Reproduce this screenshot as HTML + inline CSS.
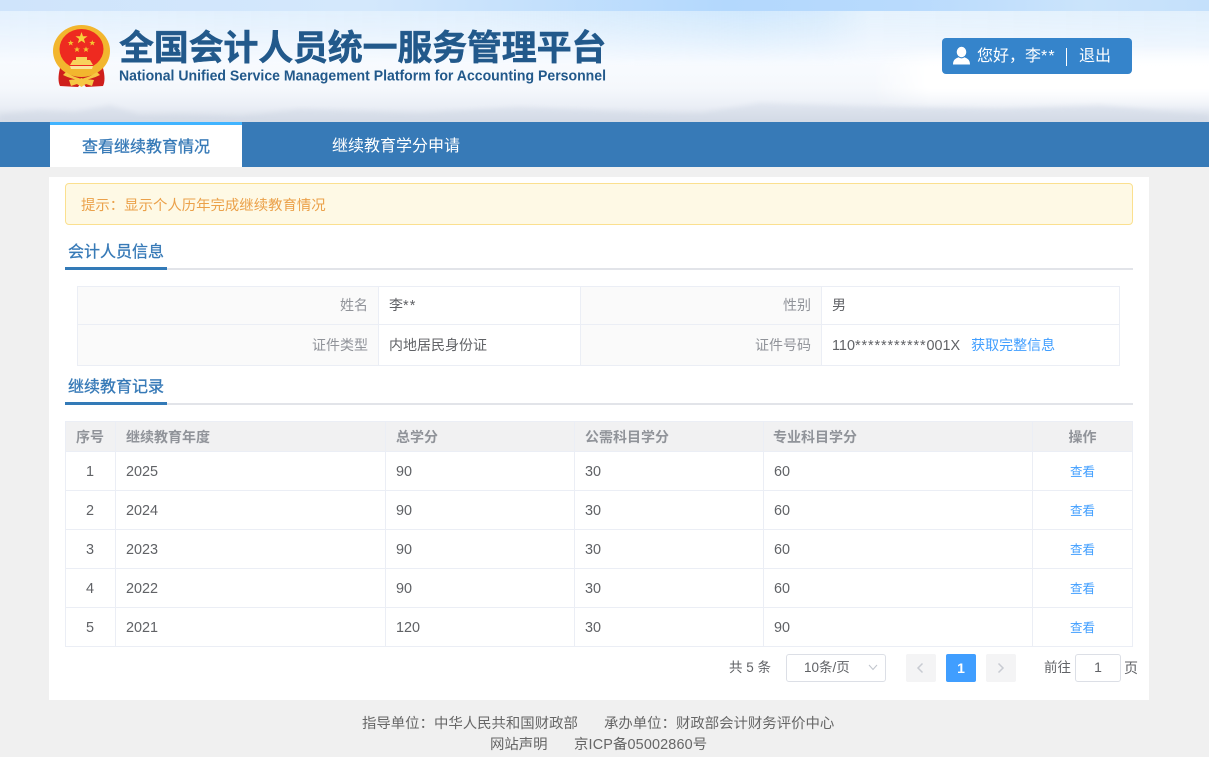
<!DOCTYPE html>
<html lang="zh-CN">
<head>
<meta charset="utf-8">
<title>全国会计人员统一服务管理平台</title>
<style>
*{box-sizing:border-box;margin:0;padding:0}
html,body{width:1209px;height:757px;overflow:hidden;background:#f0f0f0}
body{position:relative;font-family:"Liberation Sans","Noto Sans CJK SC",sans-serif;font-size:14px;color:#606266}
.a{position:absolute;white-space:nowrap}
#hd{left:0;top:0;width:1209px;height:122px;overflow:hidden;
background:linear-gradient(180deg,#e9f4fe 11px,#eef6fe 30px,#f8fbff 62px,#f5f8fc 88px,#ebeff6 106px,#d8dee8 122px)}
.cell{position:absolute;border:1px solid #ebeef5;line-height:37px}
.g{background:#fafafa;color:#909399;text-align:right;padding-right:10px}
.v{background:#fff;padding-left:10px}
.st{letter-spacing:1.100px}
.n{font-size:14.400px}
.vl{position:absolute;top:421px;height:226px;width:1px;background:#ebeef5}
.hl{position:absolute;left:65px;width:1068px;height:1px;background:#ebeef5}
.th{position:absolute;top:428px;font-size:14px;font-weight:bold;color:#909399;line-height:18px}
.c{position:absolute;line-height:20px;color:#606266;font-size:14.400px}
.l{position:absolute;left:1032px;width:101px;text-align:center;font-size:12.500px;color:#409eff;line-height:20px}
.pg{position:absolute;top:654px;width:30px;height:28px;border-radius:2px;background:#f4f4f5;text-align:center}
.ti{font-size:16px;line-height:22px;color:#377ab7;-webkit-text-stroke:.3px #377ab7}
.ft{font-size:14.400px;line-height:20px;color:#666}
.pt{font-size:13.500px;line-height:20px}
</style>
</head>
<body>
<div class="a" id="hd">
<div class="a" style="left:0;top:0;width:1209px;height:11px;background:linear-gradient(90deg,#cfe4fb,#d4e8fc 30%,#b3d8fd 60%,#b8dafd 75%,#cbe4fb 90%,#c4e0fb)"></div>
<div class="a" style="left:0;top:11px;width:1209px;height:55px;background:linear-gradient(90deg,rgba(210,232,252,.2) 0,rgba(205,230,252,.3) 40%,rgba(195,226,252,.65) 62%,rgba(200,228,252,.55) 68%,rgba(225,240,252,.35) 72%,rgba(215,235,252,.4) 100%);-webkit-mask-image:linear-gradient(180deg,#000,transparent)"></div>
<div class="a" style="left:870px;top:45px;width:339px;height:65px;background:linear-gradient(180deg,rgba(255,255,255,0),#fff 35%,#fff 65%,rgba(255,255,255,0));-webkit-mask-image:linear-gradient(90deg,transparent,#000 60px)"></div>
<svg class="a" style="left:0;top:85px;filter:blur(2px)" width="1209" height="37" viewBox="0 0 1209 37"><path d="M0 37V29L40 25 75 27 110 20 140 30 180 29 240 31 300 24 420 28 520 22 640 27 700 28 760 18 900 22 1000 24 1100 20 1160 26 1209 29V37Z" fill="#c4cede" opacity=".3"/></svg>
<svg class="a" style="left:0;top:0" width="130" height="95" viewBox="0 0 130 95">
<path d="M60 68C58 76 58 82 60 86L78 87 82 82 86 87 103 86C105 82 105 76 103 68Z" fill="#cf1f1c"/>
<ellipse cx="81.500" cy="51" rx="28.500" ry="26" fill="#f2b62e"/>
<ellipse cx="81.500" cy="49" rx="22" ry="20" fill="#ee2a20"/>
<polygon points="81.500,32 83,36.300 87.500,36.300 83.900,39 85.200,43.300 81.500,40.700 77.800,43.300 79.100,39 75.500,36.300 80,36.300" fill="#f6d23b"/>
<polygon points="70.700,40 71.500,42 73.700,42 72,43.300 72.600,45.500 70.700,44.200 68.800,45.500 69.400,43.300 67.700,42 69.900,42" fill="#f3c431"/>
<polygon points="92.300,40 93.100,42 95.300,42 93.600,43.300 94.200,45.500 92.300,44.200 90.400,45.500 91,43.300 89.300,42 91.500,42" fill="#f3c431"/>
<polygon points="77,46.500 77.800,48.500 80,48.500 78.300,49.800 78.900,52 77,50.700 75.100,52 75.700,49.800 74,48.500 76.200,48.500" fill="#f3c431"/>
<polygon points="86,46.500 86.800,48.500 89,48.500 87.300,49.800 87.900,52 86,50.700 84.100,52 84.700,49.800 83,48.500 85.200,48.500" fill="#f3c431"/>
<path d="M76 57H87V60H90L93 65H70L73 60H76Z" fill="#f8d25c"/>
<path d="M70 66H93L92 69H71Z" fill="#fbe39a"/>
<path d="M66 72C73 77 76 77 81.500 79 87 77 90 77 97 72L100 75C94 78 88 79 81.500 82 75 79 69 78 63 75Z" fill="#f6c744"/>
<path d="M69 80C74 79 78 80 81.500 78 85 80 89 79 94 80L92 86 86 84 81.500 87 77 84 71 86Z" fill="#f6c744"/>
</svg>
<div class="a" style="left:119px;top:26px;font-size:35px;line-height:46px;font-weight:bold;color:#22598b;letter-spacing:-.2px;-webkit-text-stroke:.5px #22598b">全国会计人员统一服务管理平台</div>
<svg class="a" style="left:0;top:62px" width="700" height="24"><text x="119" y="18.500" font-family="Liberation Sans" font-size="14.500" font-weight="bold" fill="#22598b" textLength="487" lengthAdjust="spacingAndGlyphs">National Unified Service Management Platform for Accounting Personnel</text></svg>
<div class="a" style="left:942px;top:38px;width:190px;height:36px;background:#3584cb;border-radius:4px"></div>
<svg class="a" style="left:952px;top:46px" width="20" height="20" viewBox="0 0 20 20"><ellipse cx="9.500" cy="6" rx="4.800" ry="5.200" fill="#fff"/><path d="M1 18.500C1 13.500 4 12.500 6.500 11.300 8.500 12.700 10.500 12.700 12.500 11.300 15 12.500 18 13.500 18 18.500Z" fill="#fff"/></svg>
<div class="a" style="left:977px;top:46px;font-size:16px;line-height:22px;color:#fff">您好，李<span class="st">**</span></div>
<div class="a" style="left:1066px;top:48px;width:1px;height:18px;background:#fff"></div>
<div class="a" style="left:1079px;top:46px;font-size:16px;line-height:22px;color:#fff">退出</div>
</div>

<div class="a" style="left:0;top:122px;width:1209px;height:45px;background:#377ab7"></div>
<div class="a" style="left:50px;top:122px;width:192px;height:45px;background:#fff;border-top:3px solid #41b4ff"></div>
<div class="a ti" style="left:50px;top:137px;width:192px;text-align:center">查看继续教育情况</div>
<div class="a" style="left:332px;top:136px;font-size:16px;line-height:22px;color:#fff">继续教育学分申请</div>

<div class="a" style="left:49px;top:177px;width:1100px;height:523px;background:#fff"></div>
<div class="a" style="left:65px;top:183px;width:1068px;height:42px;background:#fef9e5;border:1px solid #fbe08f;border-radius:4px"></div>
<div class="a" style="left:81px;top:196px;font-size:14.400px;line-height:20px;color:#eba14a">提示：显示个人历年完成继续教育情况</div>

<div class="a" style="left:65px;top:268px;width:1068px;height:2px;background:#e2e4e9"></div>
<div class="a" style="left:65px;top:267px;width:102px;height:3px;background:#337ab7"></div>
<div class="a ti" style="left:68px;top:242px">会计人员信息</div>

<div class="cell g" style="left:77px;top:286px;width:302px;height:39px">姓名</div>
<div class="cell v" style="left:378px;top:286px;width:203px;height:39px">李<span class="st n">**</span></div>
<div class="cell g" style="left:580px;top:286px;width:242px;height:39px">性别</div>
<div class="cell v" style="left:821px;top:286px;width:299px;height:39px">男</div>
<div class="cell g" style="left:77px;top:324px;width:302px;height:42px;line-height:40px">证件类型</div>
<div class="cell v" style="left:378px;top:324px;width:203px;height:42px;line-height:40px">内地居民身份证</div>
<div class="cell g" style="left:580px;top:324px;width:242px;height:42px;line-height:40px">证件号码</div>
<div class="cell v" style="left:821px;top:324px;width:299px;height:42px;line-height:40px"><span class="n">110<span style="letter-spacing:.9px">***********</span>001X</span><span style="color:#409eff;margin-left:11px">获取完整信息</span></div>

<div class="a" style="left:65px;top:403px;width:1068px;height:2px;background:#e2e4e9"></div>
<div class="a" style="left:65px;top:402px;width:102px;height:3px;background:#337ab7"></div>
<div class="a ti" style="left:68px;top:377px">继续教育记录</div>

<div class="a" style="left:65px;top:421px;width:1068px;height:31px;background:#f1f1f2"></div>
<div class="hl" style="top:421px"></div><div class="hl" style="top:451px"></div><div class="hl" style="top:490px"></div><div class="hl" style="top:529px"></div><div class="hl" style="top:568px"></div><div class="hl" style="top:607px"></div><div class="hl" style="top:646px"></div>
<div class="vl" style="left:65px"></div><div class="vl" style="left:115px"></div><div class="vl" style="left:385px"></div><div class="vl" style="left:574px"></div><div class="vl" style="left:763px"></div><div class="vl" style="left:1032px"></div><div class="vl" style="left:1132px"></div>

<div class="th" style="left:65px;width:50px;text-align:center">序号</div>
<div class="th" style="left:126px">继续教育年度</div>
<div class="th" style="left:396px">总学分</div>
<div class="th" style="left:585px">公需科目学分</div>
<div class="th" style="left:773px">专业科目学分</div>
<div class="th" style="left:1032px;width:101px;text-align:center">操作</div>

<div class="c" style="left:65px;top:462px;width:50px;text-align:center">1</div><div class="c" style="left:126px;top:462px">2025</div><div class="c" style="left:396px;top:462px">90</div><div class="c" style="left:585px;top:462px">30</div><div class="c" style="left:774px;top:462px">60</div><div class="l" style="top:462px">查看</div>
<div class="c" style="left:65px;top:501px;width:50px;text-align:center">2</div><div class="c" style="left:126px;top:501px">2024</div><div class="c" style="left:396px;top:501px">90</div><div class="c" style="left:585px;top:501px">30</div><div class="c" style="left:774px;top:501px">60</div><div class="l" style="top:501px">查看</div>
<div class="c" style="left:65px;top:540px;width:50px;text-align:center">3</div><div class="c" style="left:126px;top:540px">2023</div><div class="c" style="left:396px;top:540px">90</div><div class="c" style="left:585px;top:540px">30</div><div class="c" style="left:774px;top:540px">60</div><div class="l" style="top:540px">查看</div>
<div class="c" style="left:65px;top:579px;width:50px;text-align:center">4</div><div class="c" style="left:126px;top:579px">2022</div><div class="c" style="left:396px;top:579px">90</div><div class="c" style="left:585px;top:579px">30</div><div class="c" style="left:774px;top:579px">60</div><div class="l" style="top:579px">查看</div>
<div class="c" style="left:65px;top:618px;width:50px;text-align:center">5</div><div class="c" style="left:126px;top:618px">2021</div><div class="c" style="left:396px;top:618px">120</div><div class="c" style="left:585px;top:618px">30</div><div class="c" style="left:774px;top:618px">90</div><div class="l" style="top:618px">查看</div>

<div class="a pt" style="left:729px;top:658px">共 5 条</div>
<div class="a" style="left:786px;top:654px;width:100px;height:28px;border:1px solid #dcdfe6;border-radius:3px;background:#fff"></div>
<div class="a pt" style="left:804px;top:658px">10条/页</div>
<svg class="a" style="left:868px;top:662px" width="10" height="10" viewBox="0 0 10 10"><path d="M1 3 5 7.500 9 3" fill="none" stroke="#c0c4cc" stroke-width="1"/></svg>
<div class="pg" style="left:906px"></div>
<svg class="a" style="left:915px;top:662px" width="10" height="12" viewBox="0 0 10 12"><path d="M7.500 1.500 3 6 7.500 10.500" fill="none" stroke="#c8cbd2" stroke-width="1.500"/></svg>
<div class="pg" style="left:946px;background:#409eff;color:#fff;font-size:14px;font-weight:bold;line-height:28px">1</div>
<div class="pg" style="left:986px"></div>
<svg class="a" style="left:996px;top:662px" width="10" height="12" viewBox="0 0 10 12"><path d="M2.500 1.500 7 6 2.500 10.500" fill="none" stroke="#c8cbd2" stroke-width="1.500"/></svg>
<div class="a pt" style="left:1044px;top:658px">前往</div>
<div class="a" style="left:1075px;top:654px;width:46px;height:28px;border:1px solid #dcdfe6;border-radius:3px;background:#fff;text-align:center;font-size:14px;line-height:25px">1</div>
<div class="a" style="left:1124px;top:658px;font-size:14px;line-height:20px">页</div>

<div class="a ft" style="left:362px;top:714px">指导单位：中华人民共和国财政部</div>
<div class="a ft" style="left:604px;top:714px">承办单位：财政部会计财务评价中心</div>
<div class="a ft" style="left:490px;top:735px">网站声明</div>
<div class="a ft" style="left:574px;top:735px;letter-spacing:.15px">京ICP备05002860号</div>
</body>
</html>
